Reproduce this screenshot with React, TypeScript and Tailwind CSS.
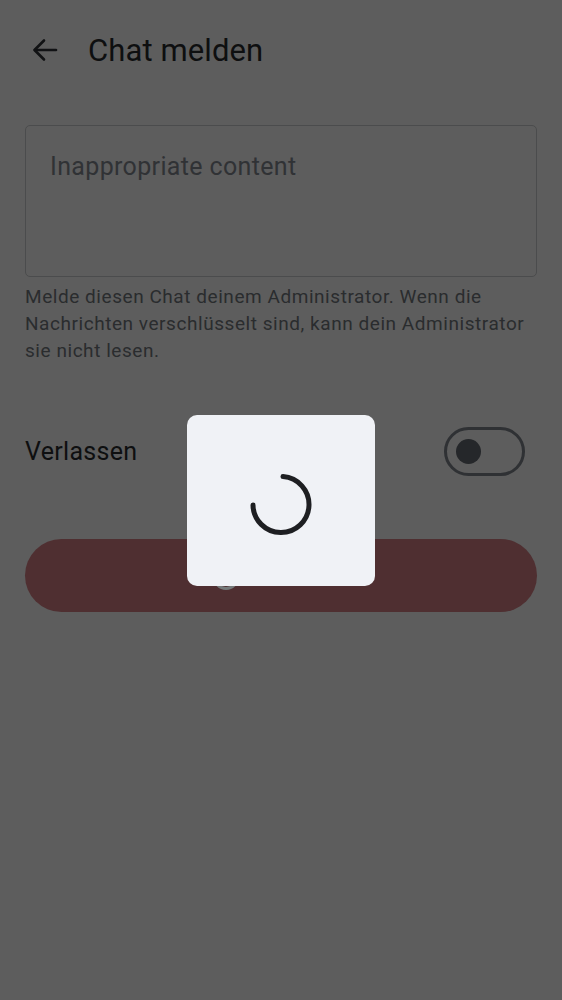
import React from 'react';

function BackArrow() {
  return (
    <svg width="32" height="32" viewBox="0 0 32 32" fill="none" stroke="#111214" strokeWidth="2.6" strokeLinecap="round" strokeLinejoin="round">
      <path d="M27 16H6" />
      <path d="M15 6.5 5.5 16l9.5 9.5" />
    </svg>
  );
}

function Spinner() {
  // ~3/4 arc, from top clockwise round to the left side
  return (
    <svg width="66" height="66" viewBox="0 0 66 66" fill="none">
      <path d="M35 5.6A28 28 0 1 1 5 34" stroke="#1e1f22" strokeWidth="5" strokeLinecap="round" />
    </svg>
  );
}

export default function App() {
  return (
    <div className="relative w-full h-[1000px] bg-[#5d5d5d] overflow-hidden" style={{ fontFamily: 'Roboto, "Noto Sans", sans-serif' }}>
      {/* Header */}
      <header className="h-[100px] flex items-center pl-[27px]">
        <button className="w-[36px] h-[36px] flex items-center justify-center">
          <BackArrow />
        </button>
        <h1 className="ml-[25px] text-[31px] leading-none text-[#0e0f10] tracking-[0.1px]">Chat melden</h1>
      </header>

      <main className="px-[25px] pt-[25px]">
        {/* Reason field */}
        <div className="h-[152px] rounded-[5px] border border-[#4b4c4d] px-[24px] pt-[25px]">
          <p className="text-[25px] leading-[32px] text-[#303235] tracking-[0.35px]">Inappropriate content</p>
        </div>
        <p className="mt-[6px] text-[19px] leading-[27px] text-[#2a2c2e] tracking-[0.55px]">
          Melde diesen Chat deinem Administrator. Wenn die Nachrichten verschlüsselt sind, kann dein Administrator sie nicht lesen.
        </p>

        {/* Leave toggle */}
        <div className="mt-[63px] flex items-center justify-between">
          <span className="text-[25px] leading-none text-[#0e0f10] tracking-[0.3px]">Verlassen</span>
          <div className="mr-[12px] w-[81px] h-[49px] rounded-full border-[3px] border-[#2f3134] flex items-center pl-[9px]">
            <div className="w-[25px] h-[25px] rounded-full bg-[#25272a]" />
          </div>
        </div>

        {/* Report button */}
        <div className="mt-[63px] h-[73px] rounded-full bg-[#4f2f31] flex items-center justify-center">
          <div className="mt-[3px] w-[26px] h-[26px] rounded-full border-[3px] border-[#767a7a] mr-[110px]" />
        </div>
      </main>

      {/* Loading dialog */}
      <div className="absolute inset-0 flex items-center justify-center">
        <div className="w-[188px] h-[171px] rounded-[10px] bg-[#f0f2f6] flex items-center justify-center pt-[8px]">
          <Spinner />
        </div>
      </div>
    </div>
  );
}
